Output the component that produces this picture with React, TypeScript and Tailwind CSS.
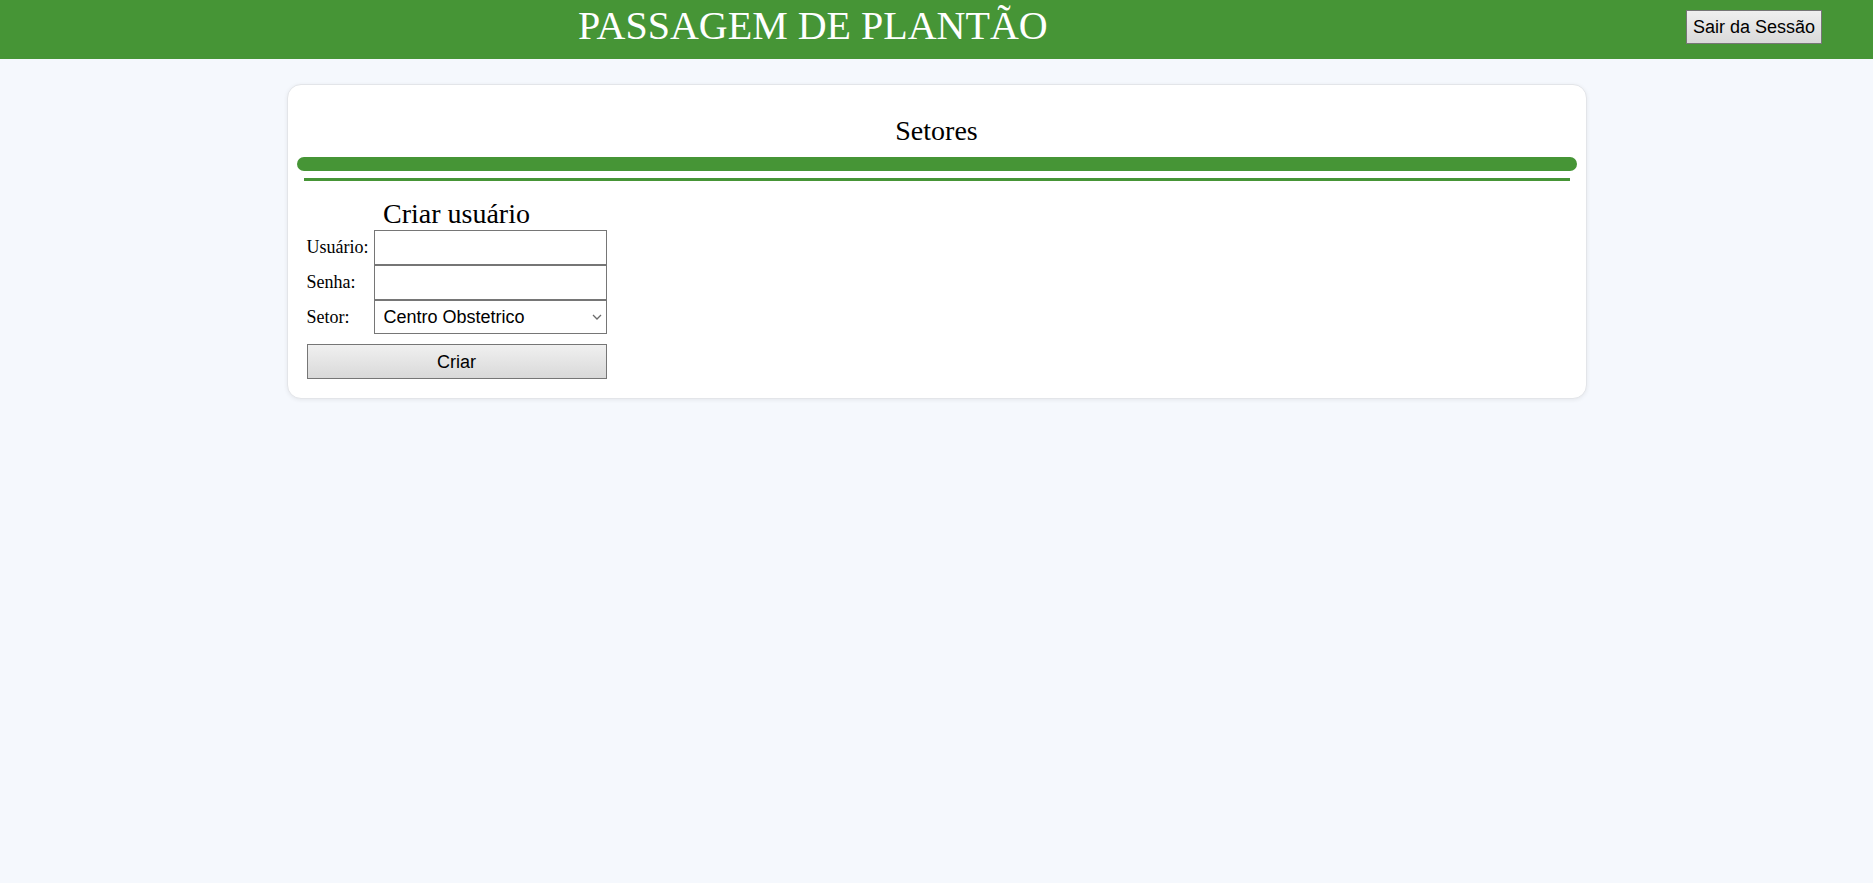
export default function App() {
  return (
    <div className="min-h-screen bg-[#f5f8fd] font-['Liberation_Serif',serif] text-black">
      <header className="h-[59px] bg-[#469536] flex items-start">
        <h1 className="ml-[578px] mt-[4px] text-[40px] leading-[44px] text-white font-normal">
          PASSAGEM DE PLANTÃO
        </h1>
        <button className="ml-auto mr-[51px] mt-[10px] h-[34px] w-[136px] border border-[#767676] bg-gradient-to-b from-[#f0f0f0] to-[#d9d9d9] font-['Liberation_Sans',sans-serif] text-[18px] leading-none text-black">
          Sair da Sessão
        </button>
      </header>

      <main className="pt-[25px]">
        <div className="w-[1300px] h-[315px] mx-auto bg-white border border-[#e3e5e9] rounded-[14px] shadow-[0_1px_4px_rgba(0,0,0,0.07)] pt-[30px]">
          <h2 className="text-center text-[28px] leading-[32px] font-normal">Setores</h2>
          <div className="mt-[10px] mx-[9px] h-[14px] rounded-full bg-[#469536]" />
          <div className="mt-[7px] mx-[16px] h-[3px] bg-[#469536]" />

          <form className="ml-[19px] mt-[17px] w-[300px]" onSubmit={(e) => e.preventDefault()}>
            <div className="text-center text-[28px] leading-[32px]">Criar usuário</div>
            <div className="flex items-center h-[35px]">
              <label className="w-[67px] text-[18px]">Usuário:</label>
              <input className="w-[233px] h-[35px] border border-[#767676] bg-white outline-none" />
            </div>
            <div className="flex items-center h-[35px]">
              <label className="w-[67px] text-[18px]">Senha:</label>
              <input type="password" className="w-[233px] h-[35px] border border-[#767676] bg-white outline-none" />
            </div>
            <div className="flex items-center h-[34px]">
              <label className="w-[67px] text-[18px]">Setor:</label>
              <div className="relative w-[233px] h-[34px]">
                <select className="appearance-none w-full h-full border border-[#767676] bg-white pl-[9px] font-['Liberation_Sans',sans-serif] text-[18px] text-black outline-none">
                  <option>Centro Obstetrico</option>
                </select>
                <svg className="absolute right-[5px] top-[14px] pointer-events-none" width="10" height="6" viewBox="0 0 10 6">
                  <path d="M1 1 L5 5 L9 1" fill="none" stroke="#6b6b6b" strokeWidth="1.3" />
                </svg>
              </div>
            </div>
            <button type="submit" className="mt-[10px] w-[300px] h-[35px] border border-[#767676] bg-gradient-to-b from-[#f0f0f0] to-[#d9d9d9] font-['Liberation_Sans',sans-serif] text-[18px] leading-none text-black">
              Criar
            </button>
          </form>
        </div>
      </main>
    </div>
  );
}
